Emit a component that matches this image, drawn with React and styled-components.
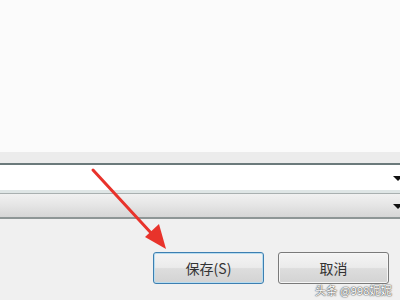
import styled, { createGlobalStyle } from "styled-components";

const GlobalStyle = createGlobalStyle`
  html, body {
    margin: 0;
    padding: 0;
    background: #f0f0f0;
  }
`;

export default function App() {
  return (
    <>
      <GlobalStyle />
      <Dialog>
        <Preview />
        <Strip />
        <ComboRow $variant="input">
          <Caret />
        </ComboRow>
        <ComboRow $variant="select">
          <Caret />
        </ComboRow>
        <Footer>
          <Button $primary>保存(S)</Button>
          <Button>取消</Button>
        </Footer>
        <Arrow viewBox="0 0 400 300">
          <line x1="93" y1="170" x2="152" y2="234" stroke="#e8332b" strokeWidth="3" strokeLinecap="round" />
          <polygon points="166,249 145,237 159,224" fill="#e8332b" />
        </Arrow>
        <Watermark>头条 @998妮妮</Watermark>
      </Dialog>
    </>
  );
}

const Dialog = styled.div`
  position: relative;
  width: 400px;
  height: 300px;
  overflow: hidden;
  display: flex;
  flex-direction: column;
  background: #f0f0f0;
  font-family: "Noto Sans CJK SC", "Liberation Sans", sans-serif;
`;

const Preview = styled.div`
  height: 152px;
  flex-shrink: 0;
  background: #fbfbfb;
`;

const Strip = styled.div`
  height: 11px;
  flex-shrink: 0;
  background: #ececec;
  border-bottom: 2px solid #6b7a7b;
`;

const ComboRow = styled.div`
  width: 400px;
  height: ${(p) => (p.$variant === "input" ? "25px" : "23px")};
  flex-shrink: 0;
  display: flex;
  align-items: center;
  justify-content: flex-end;
  box-sizing: content-box;
  background: ${(p) =>
    p.$variant === "input"
      ? "#ffffff"
      : "linear-gradient(#f1f1f1 0%, #e6e6e6 45%, #d6d6d6 100%)"};
  border-bottom: ${(p) =>
    p.$variant === "input" ? "3px solid #dfe6e6" : "2px solid #8e9696"};
  border-top: ${(p) => (p.$variant === "input" ? "none" : "1px solid #a9b0b0")};
`;

const Caret = styled.span`
  width: 0;
  height: 0;
  margin-right: -3px;
  margin-top: 2px;
  border-left: 5px solid transparent;
  border-right: 5px solid transparent;
  border-top: 5px solid #111;
`;

const Footer = styled.div`
  flex: 1;
  display: flex;
  justify-content: flex-end;
  align-items: flex-start;
  gap: 14px;
  padding: 33px 11px 0 0;
`;

const Button = styled.button`
  width: 111px;
  height: 32px;
  border-radius: 3px;
  font-family: "Noto Sans CJK SC", "Liberation Sans", sans-serif;
  font-size: 14px;
  color: #333;
  cursor: pointer;
  background: linear-gradient(#f4f4f4 0%, #ebebeb 48%, #dddddd 52%, #d3d3d3 100%);
  border: 1px solid ${(p) => (p.$primary ? "#3c7fb1" : "#7a7a7a")};
  box-shadow: ${(p) =>
    p.$primary ? "inset 0 0 0 1px #b8dcef" : "inset 0 0 0 1px #f6f6f6"};
  padding: 0;
`;

const Arrow = styled.svg`
  position: absolute;
  inset: 0;
  width: 400px;
  height: 300px;
  pointer-events: none;
`;

const Watermark = styled.span`
  position: absolute;
  right: 8px;
  bottom: 2px;
  font-family: "Noto Sans CJK SC", sans-serif;
  font-size: 11px;
  color: #ffffff;
  text-shadow: 0 0 1px #555, 0 0 1px #555, 0 0 2px #777;
  letter-spacing: 0.2px;
`;
